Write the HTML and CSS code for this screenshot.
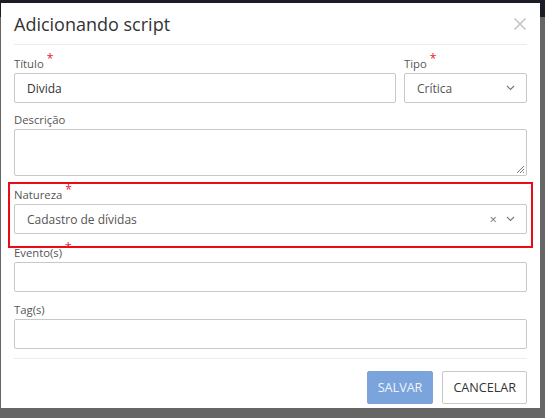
FILE: index.html
```html
<!DOCTYPE html>
<html lang="pt">
<head>
<meta charset="utf-8">
<title>Adicionando script</title>
<link rel="stylesheet" href="styles.css">
</head>
<body>
<div class="modal">
  <div class="modal-header">
    <h1 class="modal-title">Adicionando script</h1>
    <button class="close" aria-label="Fechar">
      <svg width="14" height="14" viewBox="0 0 14 14"><path d="M1.5 1.5 L12.5 12.5 M12.5 1.5 L1.5 12.5" stroke="#c4c4c4" stroke-width="1.6" fill="none"/></svg>
    </button>
  </div>
  <form class="modal-body">
    <div class="row">
      <div class="group grow first">
        <label class="label">Título <span class="req">*</span></label>
        <div class="input"><span class="value">Divida</span></div>
      </div>
      <div class="group tipo first">
        <label class="label">Tipo <span class="req">*</span></label>
        <div class="input select"><span class="value muted">Crítica</span>
          <svg class="chev" width="9" height="6" viewBox="0 0 9 6"><path d="M1 1 L4.5 4.5 L8 1" stroke="#777" stroke-width="1.1" fill="none"/></svg>
        </div>
      </div>
    </div>
    <div class="group">
      <label class="label">Descrição</label>
      <div class="textarea">
        <svg class="grip" width="9" height="9" viewBox="0 0 9 9"><path d="M8 1 L1 8 M8 4 L4 8 M8 7 L7 8" stroke="#777" stroke-width="1" fill="none"/></svg>
      </div>
    </div>
    <div class="group highlight">
      <label class="label">Natureza <span class="req">*</span></label>
      <div class="input select"><span class="value muted">Cadastro de dívidas</span>
        <span class="clear">×</span>
        <svg class="chev" width="9" height="6" viewBox="0 0 9 6"><path d="M1 1 L4.5 4.5 L8 1" stroke="#777" stroke-width="1.1" fill="none"/></svg>
      </div>
    </div>
    <div class="group tight">
      <label class="label">Evento(s) <span class="req">*</span></label>
      <div class="input"></div>
    </div>
    <div class="group tight">
      <label class="label">Tag(s)</label>
      <div class="input"></div>
    </div>
  </form>
  <div class="modal-footer">
    <button class="btn primary" type="button">SALVAR</button>
    <button class="btn" type="button">CANCELAR</button>
  </div>
</div>
</body>
</html>
```
FILE: styles.css
```css
html, body {
  margin: 0;
  padding: 0;
}
body {
  width: 545px;
  height: 418px;
  overflow: hidden;
  background: linear-gradient(to bottom, #1a1e24 0, #1a1e24 17px, #666666 17px);
  font-family: "Open Sans", "Liberation Sans", sans-serif;
  color: #333;
  padding-top: 3px;
  box-sizing: border-box;
}
.modal {
  margin-left: 1px;
  width: 539px;
  height: 405px;
  background: #fff;
  padding: 0 13px;
  box-sizing: border-box;
  display: flex;
  flex-direction: column;
}
.modal-header {
  height: 41px;
  border-bottom: 1px solid #ececec;
  display: flex;
  align-items: center;
  justify-content: space-between;
}
.modal-title {
  margin: 0;
  font-size: 18px;
  font-weight: 400;
  color: #333;
  line-height: 26px;
  padding-top: 1px;
}
.close {
  border: 0;
  background: none;
  padding: 0;
  width: 14px;
  height: 14px;
  display: flex;
}
.modal-body {
  padding-top: 10px;
  display: flex;
  flex-direction: column;
}
.row {
  display: flex;
  gap: 8px;
}
.grow { flex: 1; }
.tipo { width: 123px; }
.group {
  display: flex;
  flex-direction: column;
  margin-bottom: 10px;
}
.group.first { margin-bottom: 8px; }
.group.tight { margin-bottom: 9px; }
.label {
  font-size: 11.3px;
  line-height: 18px;
  color: #555;
}
.req {
  color: #e8192c;
  font-size: 12px;
  position: relative;
  top: -5px;
}
.input {
  height: 30px;
  border: 1px solid #c8c8c8;
  border-radius: 2px;
  box-sizing: border-box;
  display: flex;
  align-items: center;
  padding: 0 12px;
  font-size: 12px;
  color: #333;
}
.muted { color: #555; }
.select .value { flex: 1; }
.chev { margin-right: -1px; }
.clear {
  color: #777;
  font-size: 13px;
  margin-right: 9px;
}
.textarea {
  height: 47px;
  border: 1px solid #c8c8c8;
  border-radius: 2px;
  box-sizing: border-box;
  display: flex;
  justify-content: flex-end;
  align-items: flex-end;
  padding: 0 1px 1px 0;
}
.highlight {
  position: relative;
}
.highlight::after {
  content: "";
  position: absolute;
  left: -6px;
  right: -6px;
  top: -4px;
  bottom: -14px;
  border: 2px solid #ee0a14;
  pointer-events: none;
}
.modal-footer {
  border-top: 1px solid #ececec;
  display: flex;
  justify-content: flex-end;
  gap: 9px;
  padding-top: 12px;
}
.btn {
  height: 33px;
  padding: 0 10px;
  font-family: "Open Sans", "Liberation Sans", sans-serif;
  font-size: 12.6px;
  border: 1px solid #c8c8c8;
  border-radius: 2px;
  background: #fff;
  color: #333;
}
.btn.primary {
  background: #7ba4dd;
  border-color: #7ba4dd;
  color: #eef3fb;
  padding: 0 10px;
}
```
